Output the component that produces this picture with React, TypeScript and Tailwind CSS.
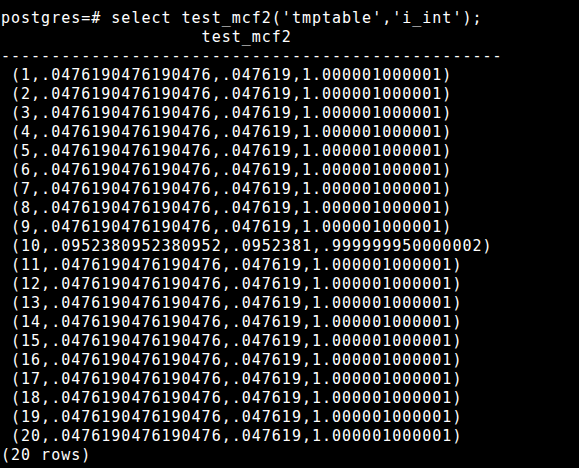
import React from 'react';

const rows = Array.from({ length: 20 }, (_, i) =>
  i === 9
    ? ' (10,.0952380952380952,.0952381,.999999950000002)'
    : ` (${i + 1},.0476190476190476,.047619,1.000001000001)`
);

export default function App() {
  const lines = [
    "postgres=# select test_mcf2('tmptable','i_int');",
    '                    test_mcf2',
    '-'.repeat(50),
    ...rows,
    '(20 rows)',
  ];

  return (
    <div className="w-[579px] h-[468px] bg-black overflow-hidden pt-[9px] pl-[1px]">
      <pre className="m-0 text-white text-[15px] leading-[19px] tracking-[1px] whitespace-pre font-['DejaVu_Sans_Mono',monospace]">
        {lines.join('\n')}
      </pre>
    </div>
  );
}
